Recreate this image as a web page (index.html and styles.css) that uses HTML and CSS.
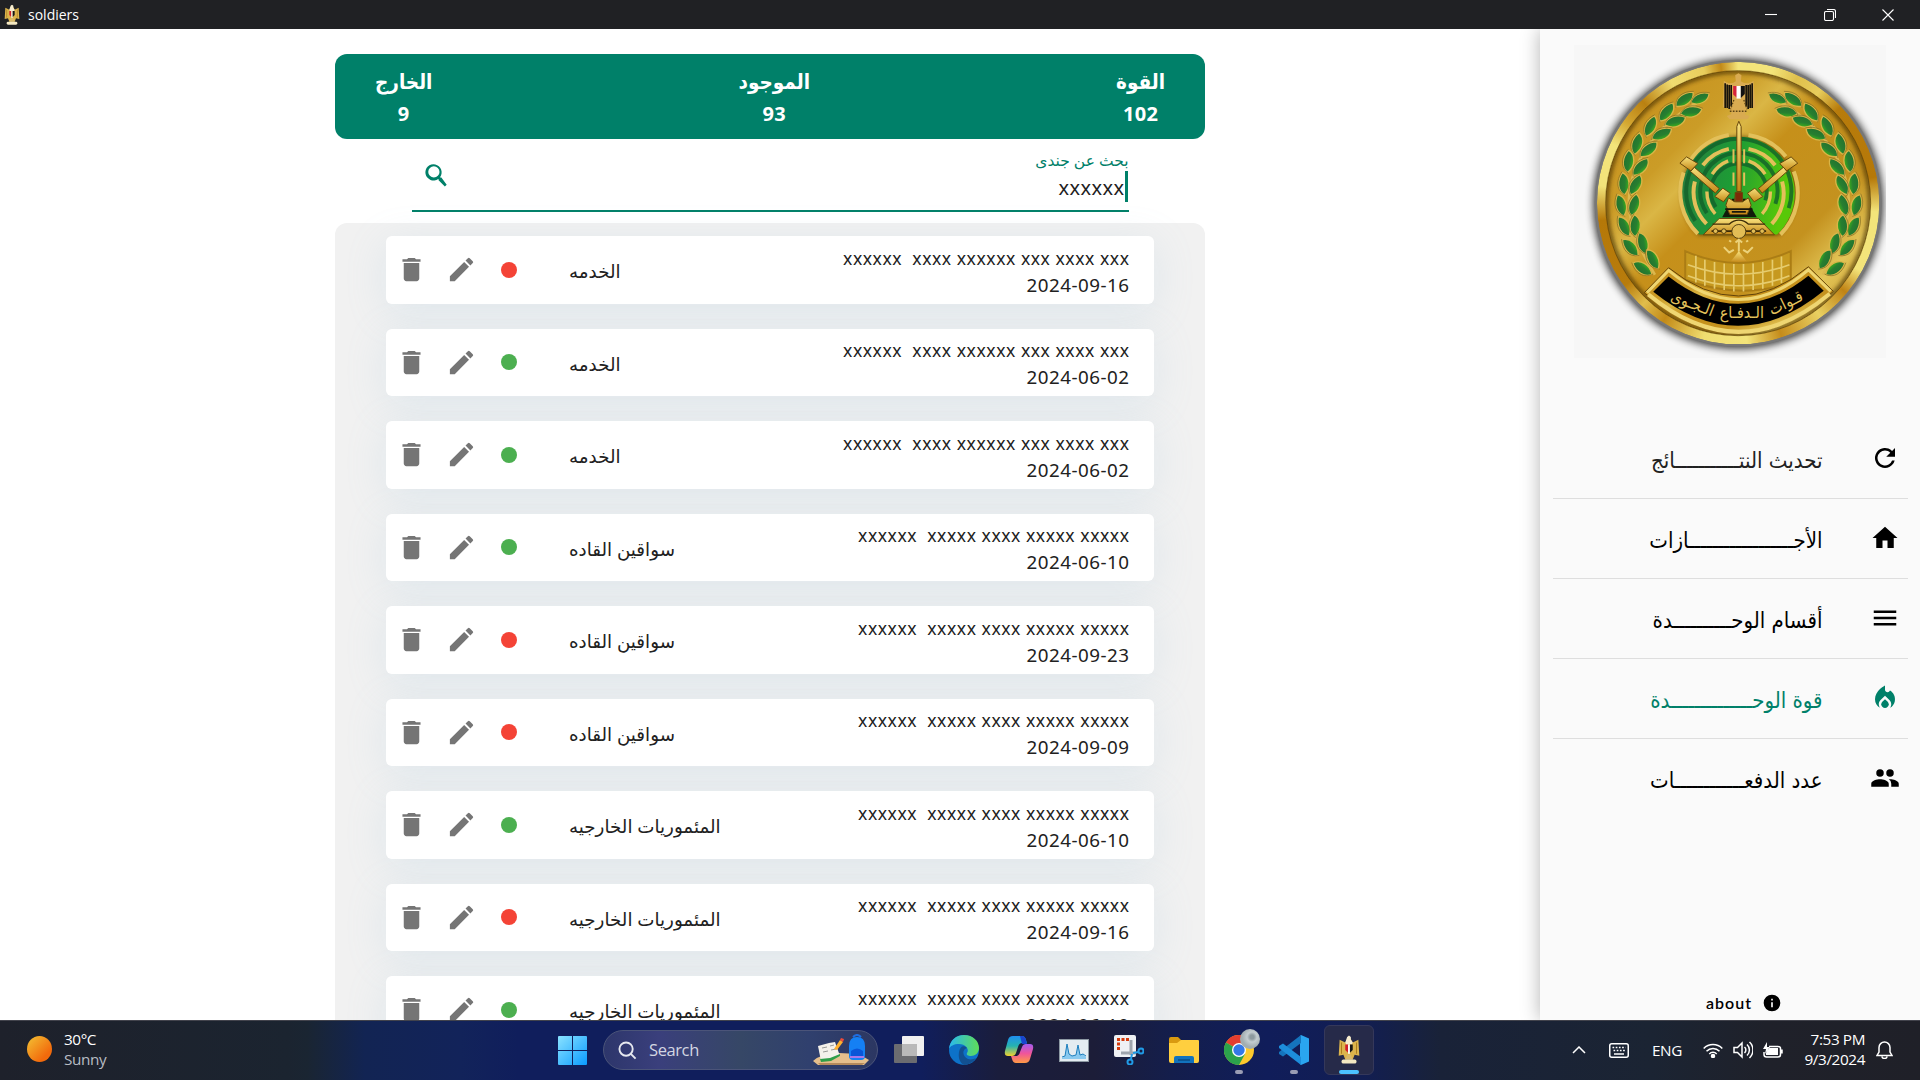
FILE: index.html
```html
<!DOCTYPE html>
<html lang="ar">
<head>
<meta charset="utf-8">
<title>soldiers</title>
<link rel="stylesheet" href="styles.css">
</head>
<body>
<svg class="defs" width="0" height="0" aria-hidden="true">
  <defs>
    <linearGradient id="gold" x1="0" y1="0" x2="1" y2="1"><stop offset="0" stop-color="#c48a17"/><stop offset=".28" stop-color="#cb9c27"/><stop offset=".36" stop-color="#dab645"/><stop offset=".46" stop-color="#c6901a"/><stop offset=".68" stop-color="#c4921f"/><stop offset=".8" stop-color="#e3c557"/><stop offset="1" stop-color="#b98213"/></linearGradient>
    <linearGradient id="bar" x1="0" y1="0" x2="0" y2="1"><stop offset="0" stop-color="#f7e17c"/><stop offset="1" stop-color="#c48716"/></linearGradient>
    <linearGradient id="radar" x1="0" y1="0" x2="1" y2=".2"><stop offset="0" stop-color="#2b7a40"/><stop offset=".5" stop-color="#1d9c35"/><stop offset="1" stop-color="#58c808"/></linearGradient>
    <linearGradient id="leafg" x1="0" y1="0" x2="0" y2="1"><stop offset="0" stop-color="#23722f"/><stop offset=".6" stop-color="#277f30"/><stop offset="1" stop-color="#3eb01c"/></linearGradient>
    <filter id="soft" x="-10%" y="-10%" width="120%" height="120%"><feGaussianBlur stdDeviation="12"/></filter>
    <filter id="soft2" x="-10%" y="-10%" width="120%" height="120%"><feGaussianBlur stdDeviation="6"/></filter>
    <symbol id="i-delete" viewBox="0 0 24 24"><path d="M6 19c0 1.1.9 2 2 2h8c1.1 0 2-.9 2-2V7H6v12zM19 4h-3.5l-1-1h-5l-1 1H5v2h14V4z"/></symbol>
    <symbol id="i-edit" viewBox="0 0 24 24"><path d="M3 17.25V21h3.75L17.81 9.94l-3.75-3.75L3 17.25zM20.71 7.04a1 1 0 0 0 0-1.41l-2.34-2.34a1 1 0 0 0-1.41 0l-1.83 1.83 3.75 3.75 1.83-1.83z"/></symbol>
    <symbol id="leaf" viewBox="-34 -18 68 36" overflow="visible"><path d="M-33 3C-22-19 8-23 33-8C24 15-8 23-33 3Z" fill="url(#leafg)" stroke="#d9b548" stroke-width="4"/><path d="M-35 6C-22-23 8-26 36-9" fill="none" stroke="#6b5a1c" stroke-width="1.5"/></symbol>
    <symbol id="eagle" viewBox="0 0 24 32"><path d="M9 6 12 1l3 5 1 2 6-3 1 17-5-1-2 5H8l-2-5-5 1L2 5l6 3Z" fill="#dcb44c"/><path d="M4 8v12M20 8v12" stroke="#a87a1c" stroke-width="1"/><path d="M9 5 10 2 12 .500l2 1.500v3l2 3-1 2H9L8 8Z" fill="#f6ecd0"/><path d="M8 10h3v9l-3-3Z" fill="#d31f2c"/><path d="M11 10h2v10h-2Z" fill="#fff"/><path d="M13 10h3v6l-3 3Z" fill="#171717"/><path d="M10 21h4l2 5H8Z" fill="#d9b968"/><rect x="4" y="26" width="16" height="4.500" rx="2" fill="#f4e8c2"/></symbol>
    <symbol id="laurel" overflow="visible">
      <path d="M500 250C370 320 300 440 297 540C295 620 335 700 375 765" fill="none" stroke="#dcb84e" stroke-width="8"/>
      <g>
        <use href="#leaf" transform="translate(465 240) rotate(-30)" x="-34" y="-18" width="68" height="36"/>
        <use href="#leaf" transform="translate(514 236) rotate(-18)" x="-34" y="-18" width="62" height="36"/>
        <use href="#leaf" transform="translate(411 278) rotate(-45)" x="-34" y="-18" width="68" height="36"/>
        <use href="#leaf" transform="translate(484 277) rotate(-4)" x="-34" y="-18" width="68" height="36"/>
        <use href="#leaf" transform="translate(363 320) rotate(-58)" x="-34" y="-18" width="68" height="36"/>
        <use href="#leaf" transform="translate(436 306) rotate(-10)" x="-34" y="-18" width="68" height="36"/>
        <use href="#leaf" transform="translate(323 372) rotate(-68)" x="-34" y="-18" width="68" height="36"/>
        <use href="#leaf" transform="translate(396 344) rotate(-18)" x="-34" y="-18" width="68" height="36"/>
        <use href="#leaf" transform="translate(297 425) rotate(-78)" x="-34" y="-18" width="68" height="36"/>
        <use href="#leaf" transform="translate(357 390) rotate(-32)" x="-34" y="-18" width="68" height="36"/>
        <use href="#leaf" transform="translate(283 492) rotate(-86)" x="-34" y="-18" width="68" height="36"/>
        <use href="#leaf" transform="translate(333 443) rotate(-40)" x="-34" y="-18" width="68" height="36"/>
        <use href="#leaf" transform="translate(275 556) rotate(-98)" x="-34" y="-18" width="68" height="36"/>
        <use href="#leaf" transform="translate(318 496) rotate(-56)" x="-34" y="-18" width="68" height="36"/>
        <use href="#leaf" transform="translate(284 619) rotate(-110)" x="-34" y="-18" width="68" height="36"/>
        <use href="#leaf" transform="translate(314 556) rotate(-68)" x="-34" y="-18" width="68" height="36"/>
        <use href="#leaf" transform="translate(303 682) rotate(-125)" x="-34" y="-18" width="68" height="36"/>
        <use href="#leaf" transform="translate(317 618) rotate(-82)" x="-34" y="-18" width="68" height="36"/>
        <use href="#leaf" transform="translate(340 670) rotate(-98)" x="-34" y="-18" width="68" height="36"/>
        <use href="#leaf" transform="translate(339 745) rotate(-140)" x="-34" y="-18" width="68" height="36"/>
        <use href="#leaf" transform="translate(370 718) rotate(-112)" x="-34" y="-18" width="68" height="36"/>
      </g>
    </symbol>
  </defs>
</svg>

<header class="titlebar">
  <svg class="app-icon" viewBox="0 0 24 32"><use href="#eagle"/></svg>
  <span class="app-name">soldiers</span>
  <div class="win-buttons">
    <svg viewBox="0 0 12 12"><path d="M0 5.500h12"/></svg>
    <svg viewBox="0 0 12 12"><rect x=".5" y="2.500" width="9" height="9" rx="1.500"/><path d="M3 .5h6.500a2 2 0 0 1 2 2V9"/></svg>
    <svg viewBox="0 0 12 12"><path d="M.5.5l11 11M11.500.5l-11 11"/></svg>
  </div>
</header>

<div class="app" dir="rtl">
  <aside class="sidebar">
    <div class="emblem">
      <svg viewBox="133 75 935 940">
        <circle cx="625" cy="552" r="434" fill="#000" opacity=".85" filter="url(#soft)"/>
        <circle cx="625" cy="550" r="431" fill="#777"/>
        <circle cx="625" cy="550" r="400" fill="url(#gold)"/>
        <circle cx="625" cy="550" r="396" fill="none" stroke="#3f2a02" stroke-width="12" opacity=".8" filter="url(#soft2)"/>
        <foreignObject x="201" y="126" width="848" height="848"><div class="ring"></div></foreignObject>
        <circle cx="625" cy="550" r="398" fill="none" stroke="#5c3f06" stroke-width="2"/>
        <use href="#laurel"/>
        <use href="#laurel" transform="translate(1254 0) scale(-1 1)"/>
        <!-- eagle -->
        <g>
          <path d="M582 182c14 10 26 10 36 2l-2-18 10-6 9 6-2 18c12 8 24 8 38-2l6 80-26 6-6 16 14 4-6 10h-54l-8-10 14-6-6-16-20-4Z" fill="#d9ab51"/>
          <path d="M586 190v74M592 194v70M598 195v72M604 195v64M649 195v64M655 195v72M661 194v70M667 190v74" stroke="#17130b" stroke-width="5"/>
          <path d="M610 198h12v36l-12-10Z" fill="#d6223c"/><path d="M620 198h13v38h-13Z" fill="#fff"/><path d="M633 198h12v24l-12 12Z" fill="#111"/>
          <path d="M612 240l-10 28M642 240l10 28M600 274h54" stroke="#5b4314" stroke-width="4" stroke-dasharray="5 4"/>
        </g>
        <!-- radar disc -->
        <path d="M508 646A172 172 0 1 1 746 646Z" fill="#3d2a02" opacity=".7" filter="url(#soft2)"/>
        <path d="M508 644A170 170 0 1 1 742 644Z" fill="url(#radar)"/>
        <g fill="none" stroke="#12602a" stroke-width="12" opacity=".8"><circle cx="627" cy="515" r="158" stroke-dasharray="640 400" transform="rotate(146 627 515)"/><circle cx="627" cy="515" r="116" stroke-dasharray="470 300" transform="rotate(146 627 515)"/><circle cx="627" cy="515" r="84" stroke-dasharray="340 220" transform="rotate(146 627 515)"/></g>
        <g fill="none" stroke="#e3c05a" stroke-width="12">
          <path d="M479 425A176 176 0 0 1 597 345M656 345A176 176 0 0 1 768 410M461 458A176 176 0 0 0 504 642M792 455A176 176 0 0 1 752 644"/>
          <path d="M519 436A134 134 0 0 1 597 387M656 387A134 134 0 0 1 736 436M495 485A134 134 0 0 0 530 612M757 485A134 134 0 0 1 726 612"/>
          <path d="M547 463A100 100 0 0 1 595 423M656 423A100 100 0 0 1 706 463M531 515A100 100 0 0 0 556 582M722 515A100 100 0 0 1 697 582" stroke-width="10"/>
        </g>
        <path d="M611 388v42M643 388v42M611 458v40M643 458v40" stroke="#e3c05a" stroke-width="6"/>
        <path d="M577 592l30-55h42l32 55Z" fill="#111b0a"/>
        <g stroke="#68470b" stroke-width="3" fill="url(#bar)">
          <path d="M621 515V320l6-16 7 16v195Z"/>
          <g><path d="M482 455l11-13 75 64-11 14Z"/><path d="M450 430l20-19 34 20-21 22Z"/><path d="M555 530l24-25 22 15-20 26Z"/></g>
          <g transform="translate(1254 0) scale(-1 1)"><path d="M482 455l11-13 75 64-11 14Z"/><path d="M450 430l20-19 34 20-21 22Z"/><path d="M555 530l24-25 22 15-20 26Z"/></g>
          <path d="M618 518h18l2 28 18-12 8 22-12 28h-52l-12-28 8-22 18 12Z"/>
          <path d="M616 518h22v28h-22Z" fill="#7e2a08"/>
          <path d="M568 596h118l48 49H520Z"/>
        </g>
        <path d="M586 568l82 0M606 576h42" stroke="#17150b" stroke-width="5"/>
        <path d="M548 613h50c18-16 40-16 58 0h50" fill="none" stroke="#3c2b07" stroke-width="4"/>
        <path d="M545 634h164" stroke="#3c2b07" stroke-width="5"/>
        <g fill="#e2bd55" stroke="#3c2b07" stroke-width="2.500"><circle cx="557" cy="634" r="7"/><circle cx="582" cy="634" r="7"/><circle cx="671" cy="634" r="7"/><circle cx="697" cy="634" r="7"/><circle cx="627" cy="635" r="21"/></g>
        <path d="M627 657v38M617 668l10-8 10 8M598 662l6 4M655 662l-6 4M582 682l16 16 14-8M669 682l-16 16-13-8" fill="none" stroke="#ecd27a" stroke-width="6"/>
        <path d="M627 694l27 35h-54Z" fill="url(#bar)"/>
        <!-- radar dish grid -->
        <path d="M466 694Q627 765 783 694V790Q627 840 466 780Z" fill="#c6991f" stroke="#ab7d15" stroke-width="6"/>
        <path d="M474 735Q627 792 779 735M474 768Q627 828 779 768M498 708v80M525 720v78M554 727v80M583 731v80M612 733v82M641 733v82M670 731v80M699 727v80M728 720v78M755 710v80" fill="none" stroke="#e6cc6e" stroke-width="5"/>
        <!-- banner -->
        <path d="M343 819L416 744Q627 915 836 741L911 815Q627 1065 343 819Z" fill="url(#gold)" stroke="#61420a" stroke-width="3"/>
        <path d="M351 819L416 752Q627 928 836 750L903 815" fill="none" stroke="#efd672" stroke-width="9"/>
        <path d="M355 824Q627 1050 900 822" fill="none" stroke="#efd672" stroke-width="12"/>
        <path d="M370 816L416 770Q627 935 836 768L882 813Q627 1022 370 816Z" fill="#000"/>
        <g class="emblem-text" text-anchor="middle">
          <text transform="translate(775 864) rotate(-26)">قـوات</text>
          <text transform="translate(636 895) rotate(0)">الـدفـاع</text>
          <text transform="translate(482 866) rotate(21)">الـجـوى</text>
        </g>
      </svg>
    </div>
    <nav class="menu">
      <a class="menu-item"><svg viewBox="0 0 24 24"><path d="M17.650 6.350A8 8 0 1 0 19.730 14h-2.080A6 6 0 1 1 12 6c1.660 0 3.140.69 4.220 1.780L13 11h7V4l-2.350 2.350z"/></svg><span class="soft-ink">تحديث النتـــــــــــائج</span></a>
      <a class="menu-item"><svg viewBox="0 0 24 24"><path d="M10 20v-6h4v6h5v-8h3L12 3 2 12h3v8z"/></svg><span>الأجــــــــــــــــــازات</span></a>
      <a class="menu-item"><svg viewBox="0 0 24 24"><path d="M3 18h18v-2H3v2zm0-5h18v-2H3v2zm0-7v2h18V6H3z"/></svg><span>أقسام الوحــــــــــدة</span></a>
      <a class="menu-item active"><svg viewBox="0 0 24 24"><path d="M12 12.900l-2.130 2.090C9.310 15.550 9 16.280 9 17.060 9 18.680 10.350 20 12 20s3-1.320 3-2.940c0-.78-.31-1.520-.87-2.070L12 12.900z"/><path d="M16 6l-.44.55C14.380 8.020 12 7.190 12 5.300V2S4 6 4 13c0 2.920 1.560 5.470 3.890 6.860-.56-.79-.89-1.760-.89-2.800 0-1.320.52-2.560 1.470-3.500L12 10.100l3.530 3.470c.95.93 1.470 2.170 1.470 3.500 0 1.020-.31 1.960-.85 2.750 1.890-1.150 3.290-3.060 3.710-5.300.66-3.550-1.070-6.900-3.860-8.520z"/></svg><span>قوة الوحــــــــــــــدة</span></a>
      <a class="menu-item"><svg viewBox="0 0 24 24"><path d="M16 11a3 3 0 1 0 0-6 3 3 0 0 0 0 6zm-8 0a3 3 0 1 0 0-6 3 3 0 0 0 0 6zm0 2c-2.330 0-7 1.170-7 3.500V19h14v-2.500C15 14.170 10.330 13 8 13zm8 0c-.29 0-.62.020-.97.050A4.200 4.200 0 0 1 17 16.500V19h6v-2.500c0-2.330-4.670-3.500-7-3.500z"/></svg><span>عدد الدفعــــــــــــات</span></a>
    </nav>
    <div class="about"><svg viewBox="0 0 24 24"><path d="M12 2a10 10 0 1 0 0 20 10 10 0 0 0 0-20zm1 15h-2v-6h2v6zm0-8h-2V7h2v2z"/></svg><span>about</span></div>
  </aside>

  <main class="content">
    <section class="stats">
      <div class="stat"><span class="stat-label">القوة</span><span class="stat-value">102</span></div>
      <div class="stat"><span class="stat-label">الموجود</span><span class="stat-value">93</span></div>
      <div class="stat"><span class="stat-label">الخارج</span><span class="stat-value">9</span></div>
    </section>
    <section class="search-field">
      <div class="field-body">
        <span class="field-label">بحث عن جندى</span>
        <span class="field-value">xxxxxx</span>
      </div>
      <svg class="search-icon" viewBox="0 0 24 24"><path d="M15.500 14h-.79l-.28-.27A6.500 6.500 0 1 0 13 15.140l.27.280v.79l5 4.990L19.760 19.700 15.500 14zm-6 0a4.500 4.500 0 1 1 0-9 4.500 4.500 0 0 1 0 9z"/></svg>
    </section>
    <section class="list" dir="ltr">
      <article class="card"><svg class="ic"><use href="#i-delete"/></svg><svg class="ic"><use href="#i-edit"/></svg><i class="dot out"></i><span class="dept">الخدمه</span><div class="who"><span class="name">xxxxxx&nbsp; xxxx xxxxxx xxx xxxx xxx</span><span class="date">2024-09-16</span></div></article>
      <article class="card"><svg class="ic"><use href="#i-delete"/></svg><svg class="ic"><use href="#i-edit"/></svg><i class="dot"></i><span class="dept">الخدمه</span><div class="who"><span class="name">xxxxxx&nbsp; xxxx xxxxxx xxx xxxx xxx</span><span class="date">2024-06-02</span></div></article>
      <article class="card"><svg class="ic"><use href="#i-delete"/></svg><svg class="ic"><use href="#i-edit"/></svg><i class="dot"></i><span class="dept">الخدمه</span><div class="who"><span class="name">xxxxxx&nbsp; xxxx xxxxxx xxx xxxx xxx</span><span class="date">2024-06-02</span></div></article>
      <article class="card"><svg class="ic"><use href="#i-delete"/></svg><svg class="ic"><use href="#i-edit"/></svg><i class="dot"></i><span class="dept">سواقين القاده</span><div class="who"><span class="name">xxxxxx&nbsp; xxxxx xxxx xxxxx xxxxx</span><span class="date">2024-06-10</span></div></article>
      <article class="card"><svg class="ic"><use href="#i-delete"/></svg><svg class="ic"><use href="#i-edit"/></svg><i class="dot out"></i><span class="dept">سواقين القاده</span><div class="who"><span class="name">xxxxxx&nbsp; xxxxx xxxx xxxxx xxxxx</span><span class="date">2024-09-23</span></div></article>
      <article class="card"><svg class="ic"><use href="#i-delete"/></svg><svg class="ic"><use href="#i-edit"/></svg><i class="dot out"></i><span class="dept">سواقين القاده</span><div class="who"><span class="name">xxxxxx&nbsp; xxxxx xxxx xxxxx xxxxx</span><span class="date">2024-09-09</span></div></article>
      <article class="card"><svg class="ic"><use href="#i-delete"/></svg><svg class="ic"><use href="#i-edit"/></svg><i class="dot"></i><span class="dept">المئموريات الخارجيه</span><div class="who"><span class="name">xxxxxx&nbsp; xxxxx xxxx xxxxx xxxxx</span><span class="date">2024-06-10</span></div></article>
      <article class="card"><svg class="ic"><use href="#i-delete"/></svg><svg class="ic"><use href="#i-edit"/></svg><i class="dot out"></i><span class="dept">المئموريات الخارجيه</span><div class="who"><span class="name">xxxxxx&nbsp; xxxxx xxxx xxxxx xxxxx</span><span class="date">2024-09-16</span></div></article>
      <article class="card"><svg class="ic"><use href="#i-delete"/></svg><svg class="ic"><use href="#i-edit"/></svg><i class="dot"></i><span class="dept">المئموريات الخارجيه</span><div class="who"><span class="name">xxxxxx&nbsp; xxxxx xxxx xxxxx xxxxx</span><span class="date">2024-06-10</span></div></article>
    </section>
  </main>
</div>

<footer class="taskbar">
  <div class="weather"><i class="sun"></i><div><div>30°C</div><div class="dim">Sunny</div></div></div>
  <div class="dock">
    <svg class="start" viewBox="0 0 29 29"><defs><linearGradient id="w" x1="0" y1="0" x2="1" y2="1"><stop offset="0" stop-color="#8ae2ff"/><stop offset="1" stop-color="#0a9bff"/></linearGradient></defs><path d="M1 0h13v14H0V1a1 1 0 0 1 1-1ZM15 0h13a1 1 0 0 1 1 1v13H15ZM0 15h14v14H1a1 1 0 0 1-1-1ZM15 15h14v13a1 1 0 0 1-1 1H15Z" fill="url(#w)"/></svg>
    <div class="search-pill">
      <svg class="pill-glass" viewBox="0 0 20 20"><circle cx="8.500" cy="8.500" r="7"/><path d="M13.500 13.500l5 5"/></svg>
      <span>Search</span>
      <svg class="pill-art" viewBox="0 0 58 32"><path d="M1 27Q10 19 27 19Q48 19 57 26L52 31H6Z" fill="#e5bf8c"/><path d="M6 29h47l-3 2H8Z" fill="#b48a5c"/><path d="M6 12l11-3 6-1 5 14-9 4-10 1Z" fill="#f4f1ea"/><path d="M8 25l10-1 10-4v2l-9 5-10 1Z" fill="#2f9e48"/><path d="M10 14l5-1M11 18l5-1M18 12l4-1M19 16l5-1" stroke="#9a9a96" stroke-width="1"/><path d="M22 15l6-9 3 2-6 8Z" fill="#ffb02e"/><path d="M28 6l1-2 3 1-1 3Z" fill="#ee4b3a"/><path d="M41 3q4-4 8 0" fill="none" stroke="#1f6de0" stroke-width="2"/><path d="M37 12q0-9 8-9t8 9v10q0 4-4 4h-8q-4 0-4-4Z" fill="#1580f4"/><path d="M39 17q6-5 12 0v6H39Z" fill="#0a55d8"/><path d="M38 22h14v2H38Z" fill="#a878ea"/></svg>
    </div>
    <div class="tile"><svg viewBox="0 0 30 30"><rect x="0" y="9" width="23" height="19" rx="1" fill="#6b6c70"/><rect x="8" y="1" width="22" height="20" rx="1" fill="#f0f0f0"/><path d="M8 9h15v12H8Z" fill="#b9b9b9"/></svg></div>
    <div class="tile"><svg viewBox="0 0 30 30"><defs><linearGradient id="e1" x1="0" y1="0" x2="1" y2="0"><stop offset="0" stop-color="#29b8ee"/><stop offset="1" stop-color="#5fdc58"/></linearGradient></defs><circle cx="15" cy="15" r="15" fill="#0d72c9"/><path d="M0 14C1 5 7 0 15 0c9 0 15 6 15 13 0 5-4 8-8 8-3 0-5-1-4-3 3-4-2-9-8-9-5 0-9 2-10 5Z" fill="url(#e1)"/><path d="M10 17c1-6 5-7 8-4-5 1-5 8 1 11 3 1 6 0 8-1-4 6-10 7-12 7-4-2-6-7-5-13Z" fill="#125091"/></svg></div>
    <div class="tile"><svg viewBox="0 0 30 30"><defs><linearGradient id="c1" x1="0" y1="0" x2="0" y2="1"><stop offset="0" stop-color="#1f8ff0"/><stop offset=".5" stop-color="#25b3b0"/><stop offset="1" stop-color="#f2d22d"/></linearGradient><linearGradient id="c2" x1="0" y1="0" x2="0" y2="1"><stop offset="0" stop-color="#a45bf0"/><stop offset=".5" stop-color="#f0559a"/><stop offset="1" stop-color="#ff9a45"/></linearGradient></defs><path d="M9 1h9q3 0 4 4l1 3h-5q-3 0-4 4l-2 6q-1 3-4 3H4q-4 0-3-5L4 5q1-4 5-4Z" fill="url(#c1)"/><path d="M16 1h2q3 0 4 4l1 4h-5Z" fill="#1a45cf"/><path d="M21 28h-9q-3 0-4-4l-1-3h5q3 0 4-4l2-5q1-3 4-3h4q4 0 3 5l-3 10q-1 4-5 4Z" fill="url(#c2)"/></svg></div>
    <div class="tile"><svg viewBox="0 0 30 30"><rect x=".5" y="4.500" width="29" height="22" fill="#e4ecf1" stroke="#8d99a3"/><path d="M3 23l3-2 2-12 2 10 3 2 4-1 2-10 2 10 3-1 3 3v2H3Z" fill="#89c9ef"/><path d="M3 22l3-1 2-12 2 10 3 2 4-1 2-10 2 10 3-1 3 2" fill="none" stroke="#1d7ebd"/></svg></div>
    <div class="tile"><svg viewBox="0 0 30 30"><rect width="22" height="22" rx="2" y="0" fill="#eff1f4"/><path d="M15 4.500H4.500V15" fill="none" stroke="#d43a0c" stroke-width="3" stroke-dasharray="3 1.500"/><path d="M17 5v15M7 18h15" stroke="#9fa5ad" stroke-width="3"/><g fill="none" stroke="#219be6" stroke-width="2"><circle cx="27" cy="16" r="2.500"/><circle cx="16" cy="27" r="2.500"/><path d="M24.500 17L19 18M17 24l1-5"/></g></svg></div>
    <div class="tile"><svg viewBox="0 0 30 30"><path d="M0 4q0-2 2-2h7l3 3v5H0Z" fill="#d99a10"/><path d="M0 8h8l4-3h17q1 0 1 1v20q0 2-2 2H2q-2 0-2-2Z" fill="#ffcf3f"/><path d="M5 28v-5q0-2 2-2h16q2 0 2 2v5Z" fill="#1273bd"/><path d="M9 25h12" stroke="#0a4c86" stroke-width="1.500"/></svg></div>
    <div class="tile running"><svg viewBox="0 0 30 30"><circle cx="15" cy="15" r="15" fill="#fdc92c"/><path d="M15 15 2 7.500A15 15 0 0 1 28 7.500Z" fill="#e43d30"/><path d="M15 15 2 7.500A15 15 0 0 0 15 30l6-11Z" fill="#2ba24c"/><circle cx="15" cy="15" r="7" fill="#fff"/><circle cx="15" cy="15" r="5.700" fill="#3478e8"/></svg><i class="avatar"></i></div>
    <div class="tile running"><svg viewBox="0 0 30 30"><path d="M22 0l8 3.500v23L22 30 21 29V1Z" fill="#2aa5f0"/><path d="M22 0v8L4 21.500 0 19v-2Z" fill="#1574bd"/><path d="M22 30v-8L4 8.500 0 11v2Z" fill="#1d8ddb"/></svg></div>
    <div class="tile current"><svg viewBox="0 0 24 32"><use href="#eagle"/></svg></div>
  </div>
  <div class="tray">
    <svg class="t-chev" viewBox="0 0 14 8"><path d="M1 7l6-6 6 6"/></svg>
    <svg class="t-key" viewBox="0 0 20 15"><rect x=".75" y=".75" width="18.500" height="13.500" rx="2"/><path d="M3.500 4.500h13M4.500 7.500h12" stroke-dasharray="1.700 1.500"/><path d="M5 11h10"/></svg>
    <span class="t-lang">ENG</span>
    <svg class="t-wifi" viewBox="0 0 20 15"><path d="M.7 5.500a13 13 0 0 1 18.600 0M3.500 8.300a9 9 0 0 1 13 0M6.300 11a5 5 0 0 1 7.400 0"/><circle cx="10" cy="13" r="1.500" fill="#fff"/></svg>
    <svg class="t-vol" viewBox="0 0 20 18"><path d="M1 6.500h3.500L9 2v14l-4.500-4.500H1ZM11.500 6a4 4 0 0 1 0 6M14 3.500a7.500 7.500 0 0 1 0 11M16.500 1a11 11 0 0 1 0 16"/></svg>
    <svg class="t-bat" viewBox="0 0 20 17"><path d="M6 4.500h9q2.500 0 2.500 2v6q0 2.500-2.500 2.500H3.500Q1 15 1 12.500V10M19 7.500v4"/><path d="M6 6h9v7H3v-2Z M4 0 0 7h3l-1 5 5-7H4Z" fill="#fff" stroke="none"/></svg>
    <div class="clock"><div>7:53 PM</div><div>9/3/2024</div></div>
    <svg class="t-bell" viewBox="0 0 17 18"><path d="M8.500 1a5.500 5.500 0 0 0-5.500 5.500V11L1 14.500h15L14 11V6.500A5.500 5.500 0 0 0 8.500 1ZM6 15.500a2.500 2 0 0 0 5 0"/></svg>
  </div>
</footer>
</body>
</html>
```
FILE: styles.css
```css
* { box-sizing: border-box; }

body {
  margin: 0;
  width: 1920px;
  height: 1080px;
  overflow: hidden;
  display: flex;
  flex-direction: column;
  background: #fff;
  color: #212121;
  font-family: "Noto Sans", "Open Sans", "DejaVu Sans", sans-serif;
}

svg { display: block; flex: none; }
.defs { position: absolute; }

/* window title bar */
.titlebar {
  flex: none;
  height: 29px;
  display: flex;
  align-items: center;
  padding: 0 26px 0 4px;
  background: #202124;
  color: #fff;
}
.app-icon { width: 16px; height: 22px; }
.app-name {
  margin-left: 8px;
  font: 14px/20px "Open Sans", sans-serif;
}
.win-buttons { margin-left: auto; display: flex; gap: 46.500px; }
.win-buttons svg { width: 12px; height: 12px; fill: none; stroke: #fff; stroke-width: 1.100; }

/* layout */
.app { flex: 1; min-height: 0; display: flex; }
.sidebar {
  flex: none;
  width: 380px;
  display: flex;
  flex-direction: column;
  background: #fafafa;
  box-shadow: 0 0 18px rgba(0, 0, 0, .3);
  clip-path: inset(0 0 0 -40px);
  z-index: 1;
}
.content {
  flex: 1;
  min-width: 0;
  display: flex;
  flex-direction: column;
  align-items: center;
  padding-top: 25px;
  overflow: hidden;
}

/* sidebar */
.emblem { width: 312px; height: 313px; margin: 16px 34px 0 0; background: #f7f7f7; }
.emblem svg { width: 312px; height: 313px; }
.ring {
  width: 848px;
  height: 848px;
  border-radius: 50%;
  background: conic-gradient(from 0deg, #f3e47a 0 4%, #dfc04c 7%, #e8cd5c 10%, #b87c0c 13%, #b57808 22%, #f3e47a 26%, #f3e47a 33%, #c08314 36%, #e9d062 40%, #c58c1b 45%, #f3e47a 49%, #f0dd70 54%, #c38a17 59%, #e0bd4c 62%, #b87c0c 65%, #b57808 73%, #f3e47a 77%, #f3e47a 82%, #d4a630 85%, #b98011 88%, #f0dc70 92%, #e8cd5c 96%, #c28a18 98%, #f3e47a 100%);
  mask-image: radial-gradient(circle, transparent 397px, #000 398px);
}
.emblem-text { fill: #e4c35c; font: 48px "DejaVu Sans Condensed", "DejaVu Sans", sans-serif; direction: rtl; }

.menu { display: flex; flex-direction: column; margin: 61px 12.500px 0; }
.menu-item {
  height: 80px;
  display: flex;
  align-items: center;
  padding-right: 8px;
  gap: 47px;
  border-bottom: 1px solid #dedede;
  color: #000;
  font-family: "DejaVu Sans Condensed", "DejaVu Sans", sans-serif;
  font-size: 22px;
}
.menu-item:last-child { border-bottom: 0; }
.menu-item svg { width: 30px; height: 30px; margin-top: -2px; fill: currentColor; }
.menu-item span { line-height: 30px; padding-top: 4px; white-space: nowrap; }
.menu-item .soft-ink { color: #212121; }
.menu-item.active { color: #008069; }

.about {
  margin: auto 138px 6px 0;
  display: flex;
  align-items: center;
  gap: 10px;
  height: 22px;
  color: #000;
  font: 600 16px/22px Lato, sans-serif;
  letter-spacing: 1px;
}
.about svg { width: 20px; height: 20px; }

/* totals */
.stats {
  flex: none;
  width: 870px;
  height: 85px;
  display: flex;
  justify-content: space-between;
  padding: 13px 40px 0;
  border-radius: 12px;
  background: #008069;
  color: #fff;
  font-weight: 700;
}
.stat { display: flex; flex-direction: column; align-items: center; }
.stat-label { font-family: "DejaVu Sans Condensed", "DejaVu Sans", sans-serif; font-size: 20.500px; line-height: 31px; }
.stat-value { font-size: 20px; letter-spacing: .3px; line-height: 31px; }

/* search */
.search-field {
  flex: none;
  width: 717px;
  height: 73px;
  margin-bottom: 11px;
  display: flex;
  justify-content: space-between;
  border-bottom: 2.500px solid #008069;
}
.field-body { display: flex; flex-direction: column; align-items: flex-start; padding-top: 11px; }
.field-label { color: #008069; font-size: 15.500px; line-height: 21px; }
.field-value {
  height: 31px;
  border-right: 3px solid #008069;
  margin-right: 1px;
  font-size: 20px;
  letter-spacing: .4px;
  line-height: 34px;
}
.search-icon { width: 30px; height: 30px; margin: 21px 0 0 10px; fill: #008069; }

/* list */
.list {
  position: relative;
  isolation: isolate;
  flex: none;
  width: 870px;
  height: 900px;
  display: flex;
  flex-direction: column;
  align-items: center;
  gap: 25px;
  padding-top: 13px;
  border-radius: 12px 12px 0 0;
  background: #f1f1f1;
}
.card {
  position: relative;
  flex: none;
  width: 768px;
  height: 67.500px;
  display: flex;
  align-items: center;
  padding: 0 25px 0 9.500px;
  border-radius: 6px;
  background: #fff;
}
.card::before {
  content: "";
  position: absolute;
  inset: 0;
  z-index: -1;
  border-radius: 6px;
  box-shadow: 0 8px 40px rgba(150, 190, 220, .19);
}
.ic { width: 31px; height: 31px; margin-right: 19px; fill: #757575; }
.dot { width: 16px; height: 16px; margin-left: 5.500px; border-radius: 50%; background: #4caf50; }
.dot.out { background: #f44336; }
.dept { margin-left: 52px; font-size: 18.300px; white-space: nowrap; padding-top: 2px; }
.who { margin-left: auto; padding-top: 4px; display: flex; flex-direction: column; align-items: flex-end; }
.name { font-size: 17.600px; letter-spacing: .53px; line-height: 26px; white-space: nowrap; margin-right: -.5px; }
.date { font-size: 18.800px; letter-spacing: .5px; line-height: 28px; margin-right: -.5px; }

/* taskbar */
.taskbar {
  flex: none;
  height: 60px;
  z-index: 2;
  display: grid;
  grid-template-columns: 558px auto 1fr;
  border-top: 1px solid #42434c;
  background: linear-gradient(90deg, #1e212b 0, #1b2430 15%, #1a2532 16%, #122453 19%, #12235a 24%, #101e5c 27%, #101e5c 48%, #1a1d3c 52%, #1c1d38 57%, #141e4c 61%, #101d5a 66%, #121e52 71%, #192238 75%, #1b2433 86%, #1f212a 92%, #1f2028);
  color: #fff;
  font: 15.300px/20px "Open Sans", sans-serif;
  letter-spacing: -.4px;
}
.weather { display: flex; align-items: flex-start; padding: 8px 0 0 27px; gap: 12px; }
.weather .sun { width: 25px; height: 26px; margin-top: 7px; border-radius: 50%; background: linear-gradient(135deg, #f3c334, #f26a0c 75%); }
.weather .dim { color: #b9bdc4; }
.dock { display: flex; align-items: center; padding-bottom: 1px; }
.start { width: 29px; height: 29px; }
.search-pill {
  width: 275px;
  height: 40px;
  margin: 0 3px 0 16px;
  padding: 0 7px 0 14px;
  display: flex;
  align-items: center;
  border: 1px solid #4b5479;
  border-radius: 20px;
  background: linear-gradient(90deg, #2d366b, #3a3f7c 20%, #364766 50%, #30406e 75%, #2c3762);
  color: #d3d6e2;
  font-size: 16.500px;
}
.pill-glass { width: 19px; height: 19px; margin-right: 12px; fill: none; stroke: #e6e8ef; stroke-width: 2; }
.pill-art { width: 58px; height: 32px; margin-left: auto; }
.tile { position: relative; width: 55px; height: 50px; display: flex; align-items: center; justify-content: center; }
.tile svg { width: 30px; height: 30px; }
.running::after, .current::after {
  content: "";
  position: absolute;
  bottom: 1px;
  left: 24px;
  width: 8px;
  height: 4px;
  border-radius: 2px;
  background: #9a9db4;
}
.tile.current { width: 50px; margin-left: 3px; border: 1px solid #35385a; border-radius: 6px; background: #262a49; }
.current::after { left: 14px; bottom: 0; width: 20px; background: #4cc2ff; }
.avatar { position: absolute; left: 29px; top: 4px; width: 20px; height: 20px; border-radius: 50%; background: radial-gradient(circle at 60% 40%, #8d9a9e 0 2px, #c4cdd0 5px, #a2adb0 10px); }

.tray { display: flex; align-items: center; justify-content: flex-end; padding: 0 27px 1px 0; }
.tray svg { fill: none; stroke: #fff; stroke-width: 1.500; }
.t-chev { width: 14px; height: 8px; margin-right: 23px; }
.t-key { width: 20px; height: 15px; margin-right: 23px; }
.t-lang { width: 29px; margin-right: 22px; }
.t-wifi { width: 20px; height: 15px; margin-right: 10px; }
.t-vol { width: 20px; height: 18px; margin-right: 10px; }
.t-bat { width: 20px; height: 17px; margin-right: 21px; }
.clock { width: 61px; margin: -3px 11px 0 0; white-space: nowrap; display: flex; flex-direction: column; align-items: flex-end; }
.t-bell { width: 17px; height: 18px; }
```
